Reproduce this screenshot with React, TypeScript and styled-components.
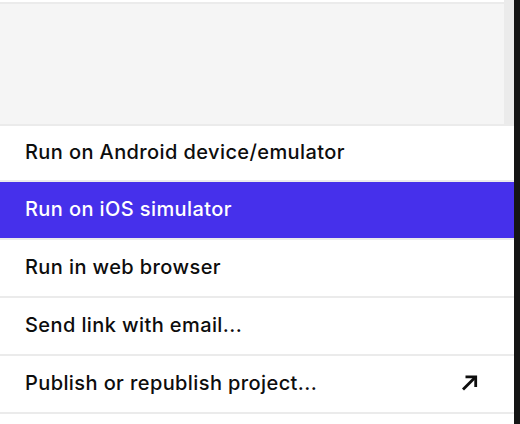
import React from "react";
import styled, { createGlobalStyle } from "styled-components";

const Global = createGlobalStyle`
  html, body { margin: 0; padding: 0; background: #ffffff; }
  body { font-family: Inter, "Noto Sans", sans-serif; }
  #root { width: 520px; height: 424px; overflow: hidden; }
`;

const Frame = styled.div`
  display: flex;
  width: 520px;
  height: 424px;
  background: #ffffff;
`;

const Main = styled.div`
  flex: 1;
  display: flex;
  flex-direction: column;
  min-width: 0;
`;

const EdgeBar = styled.div`
  width: 6px;
  background: #151515;
`;

const TopArea = styled.div`
  display: flex;
  height: 126px;
  flex-shrink: 0;
`;

const Preview = styled.div`
  flex: 1;
  margin-top: 2px;
  background: #f5f5f5;
  border-top: 2px solid #ebebeb;
  border-bottom: 2px solid #ebebeb;
`;

const ScrollTrack = styled.div`
  width: 10px;
  background: #ebebeb;
`;

const Menu = styled.ul`
  list-style: none;
  margin: 0;
  padding: 0;
`;

const Item = styled.li<{ $active?: boolean }>`
  display: flex;
  align-items: center;
  justify-content: space-between;
  box-sizing: border-box;
  height: 58px;
  padding: 0 36px 3px 25px;
  border-bottom: 2px solid #ebebeb;
  background: ${(p) => (p.$active ? "#4630eb" : "#ffffff")};
  color: ${(p) => (p.$active ? "#ffffff" : "#0d0d0d")};
  font-family: Inter, "Noto Sans", sans-serif;
  font-size: 20px;
  font-weight: 500;
  letter-spacing: 0.4px;
  &:first-child {
    height: 56px;
  }
`;

const ExternalIcon = () => (
  <svg width="17" height="17" viewBox="0 0 17 17" fill="none">
    <path d="M2 15.5L14.5 3" stroke="#0d0d0d" strokeWidth="2.8" />
    <path d="M4.5 2.8H14.7V13" stroke="#0d0d0d" strokeWidth="2.8" />
  </svg>
);

const items = [
  { label: "Run on Android device/emulator" },
  { label: "Run on iOS simulator", active: true },
  { label: "Run in web browser" },
  { label: "Send link with email..." },
  { label: "Publish or republish project...", external: true },
];

export default function App() {
  return (
    <>
      <Global />
      <Frame>
        <Main>
          <TopArea>
            <Preview />
            <ScrollTrack />
          </TopArea>
          <Menu>
            {items.map((it) => (
              <Item key={it.label} $active={it.active}>
                <span>{it.label}</span>
                {it.external && <ExternalIcon />}
              </Item>
            ))}
          </Menu>
        </Main>
        <EdgeBar />
      </Frame>
    </>
  );
}
